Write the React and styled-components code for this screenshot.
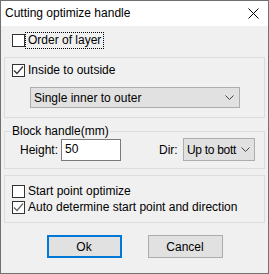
import React from "react"
import styled, { createGlobalStyle } from "styled-components"

const Global = createGlobalStyle`
  html, body { margin: 0; padding: 0; background: #fff; }
  * { box-sizing: border-box; }
`

const Window = styled.div`
  width: 269px;
  height: 274px;
  border: 1px solid #707070;
  display: flex;
  flex-direction: column;
  font-family: "Liberation Sans", Arial, sans-serif;
  font-size: 12px;
  color: #000;
  background: #f0f0f0;
`

const TitleBar = styled.div`
  height: 25px;
  background: #fff;
  display: flex;
  align-items: center;
  justify-content: space-between;
  padding: 0 9px 1px 4px;
  font-size: 12px;
`

const Body = styled.div`
  flex: 1;
  display: flex;
  flex-direction: column;
  padding: 7px 3px 0 3px;
`

const Row = styled.div`
  display: flex;
  align-items: center;
  height: ${p => p.$h || 13}px;
  padding-left: ${p => p.$indent || 0}px;
  margin-top: ${p => p.$top || 0}px;
`

const Box = styled.span`
  width: 13px;
  height: 13px;
  border: 1px solid #333;
  background: #fff;
  display: inline-flex;
  align-items: center;
  justify-content: center;
  flex: none;
`

const Label = styled.span`
  margin-left: ${p => (p.$focus ? 2 : 3)}px;
  padding: ${p => (p.$focus ? "0 1px" : "0")};
  line-height: 13px;
  outline: ${p => (p.$focus ? "1px dotted #000" : "none")};
  outline-offset: 1px;
  white-space: nowrap;
`

const Group = styled.fieldset`
  margin: ${p => p.$top || 0}px 0 0 0;
  padding: ${p => p.$pad};
  border: 1px solid #dcdcdc;
  min-width: 0;
  height: ${p => (p.$h ? p.$h + "px" : "auto")};
`

const Legend = styled.legend`
  margin-left: 6px;
  padding: 0 1px;
  line-height: 14px;
  font-size: 12px;
`

const Combo = styled.div`
  height: ${p => p.$h || 21}px;
  width: ${p => p.$w}px;
  margin-left: ${p => p.$left || 0}px;
  background: #e1e1e1;
  border: 1px solid #adadad;
  display: flex;
  align-items: center;
  padding: 0 ${p => (p.$tight ? 4 : 5)}px 0 3px;
  white-space: nowrap;
  overflow: hidden;
`

const ComboText = styled.span`
  flex: 1;
  min-width: 0;
  overflow: hidden;
  letter-spacing: ${p => (p.$tight ? "-0.3px" : "0")};
`

const ChevronWrap = styled.span`
  flex: none;
  display: flex;
  margin-left: 3px;
`

const FieldRow = styled.div`
  display: flex;
  align-items: center;
  height: 23px;
  padding-left: 15px;
`

const FieldLabel = styled.span`
  width: ${p => p.$w}px;
  margin-left: ${p => p.$left || 0}px;
`

const Input = styled.div`
  width: 60px;
  height: 22px;
  background: #fff;
  border: 1px solid #7a7a7a;
  padding: 2px 0 0 3px;
`

const Buttons = styled.div`
  display: flex;
  justify-content: center;
  gap: 26px;
  margin-top: 12px;
`

const Button = styled.div`
  width: 75px;
  height: 23px;
  background: #e1e1e1;
  border: ${p => (p.$primary ? "2px solid #0078d7" : "1px solid #adadad")};
  display: flex;
  align-items: center;
  justify-content: center;
`

const Check = ({ color }) => (
  <svg width="11" height="11" viewBox="0 0 11 11">
    <path d="M1 5.5 L4 8.5 L10 1.5" fill="none" stroke={color} strokeWidth="1.2" />
  </svg>
)

const Chevron = () => (
  <ChevronWrap>
    <svg width="9" height="5" viewBox="0 0 9 5">
      <path d="M0.5 0.5 L4.5 4.5 L8.5 0.5" fill="none" stroke="#444" strokeWidth="1" />
    </svg>
  </ChevronWrap>
)

const CheckItem = ({ checked, color = "#333", focus, children, indent, top, h }) => (
  <Row $indent={indent} $top={top} $h={h}>
    <Box>{checked && <Check color={color} />}</Box>
    <Label $focus={focus}>{children}</Label>
  </Row>
)

export default function App() {
  return (
    <>
      <Global />
      <Window>
        <TitleBar>
          <span>Cutting optimize handle</span>
          <svg width="11" height="11" viewBox="0 0 11 11">
            <path d="M0.5 0.5 L10.5 10.5 M10.5 0.5 L0.5 10.5" stroke="#000" strokeWidth="1" />
          </svg>
        </TitleBar>
        <Body>
          <CheckItem focus indent={8} h={15}>Order of layer</CheckItem>
          <Group $top={9} $h={61} $pad="6px 0 0 7px">
            <CheckItem checked>Inside to outside</CheckItem>
            <Row $top={10} $h={21}>
              <Combo $w={210} $left={18}>
                <ComboText>Single inner to outer</ComboText>
                <Chevron />
              </Combo>
            </Row>
          </Group>
          <Group $top={6} $pad="0 0 7px 0">
            <Legend>Block handle(mm)</Legend>
            <FieldRow>
              <FieldLabel $w={41}>Height:</FieldLabel>
              <Input>50</Input>
              <FieldLabel $w={24} $left={38}>Dir:</FieldLabel>
              <Combo $w={72} $h={23} $tight>
                <ComboText $tight>Up to bott</ComboText>
                <Chevron />
              </Combo>
            </FieldRow>
          </Group>
          <Group $top={6} $pad="9px 0 8px 7px">
            <CheckItem>Start point optimize</CheckItem>
            <CheckItem checked color="#666" top={3}>Auto determine start point and direction</CheckItem>
          </Group>
          <Buttons>
            <Button $primary>Ok</Button>
            <Button>Cancel</Button>
          </Buttons>
        </Body>
      </Window>
    </>
  )
}
